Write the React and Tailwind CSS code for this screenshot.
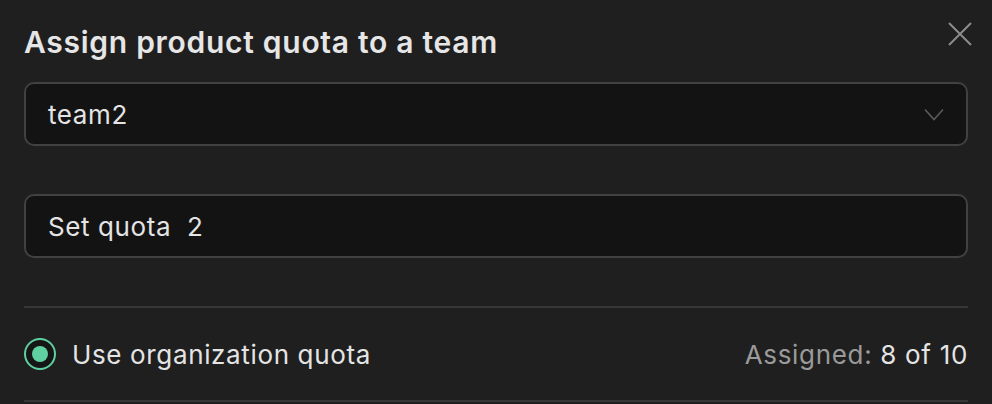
import React from 'react';

const App = () => {
  return (
    <div
      className="relative w-[992px] h-[404px] overflow-hidden bg-[#1f1f1f] text-[#e4e4e4]"
      style={{ fontFamily: 'Inter, "Noto Sans", sans-serif' }}
    >
      {/* Close button */}
      <button className="absolute top-[22px] right-[20px] w-6 h-6 text-[#8c8c8c]">
        <svg viewBox="0 0 24 24" width="24" height="24" fill="none" stroke="currentColor" strokeWidth="2">
          <path d="M1 1L23 23M23 1L1 23" />
        </svg>
      </button>

      <div className="px-6 pt-6">
        <h1 className="text-[30px] leading-[36px] font-semibold tracking-[0.72px] text-[#e6e6e6]">
          Assign product quota to a team
        </h1>

        {/* Team select */}
        <div className="mt-[22px] h-16 flex items-center justify-between rounded-[10px] border-2 border-[#414141] bg-[#131313] pl-[22px] pr-[22px]">
          <span className="text-[26px] tracking-[0.6px] text-[#e4e4e4]">team2</span>
          <svg width="20" height="13" viewBox="0 0 20 13" fill="none" stroke="#5a5a5a" strokeWidth="1.6">
            <path d="M1 1.5L10 11.5L19 1.5" />
          </svg>
        </div>

        {/* Quota input */}
        <div className="mt-12 h-16 flex items-center rounded-[10px] border-2 border-[#414141] bg-[#131313] pl-[22px]">
          <span className="text-[26px] tracking-[0.6px] text-[#e4e4e4] whitespace-pre">Set quota  2</span>
        </div>

        <div className="mt-12 border-t-2 border-[#363636]" />

        {/* Organization quota */}
        <div className="h-[94px] flex items-center justify-between border-b-2 border-[#363636]">
          <div className="flex items-center gap-4">
            <div className="w-8 h-8 rounded-full border-2 border-[#5fd0a0] flex items-center justify-center bg-[#161616]">
              <div className="w-4 h-4 rounded-full bg-[#5fd0a0]" />
            </div>
            <span className="text-[26px] tracking-[0.64px] text-[#e4e4e4]">Use organization quota</span>
          </div>
          <div className="text-[26px] tracking-[0.68px]">
            <span className="text-[#9a9a9a]">Assigned: </span>
            <span className="text-[#e4e4e4]">8 of 10</span>
          </div>
        </div>
      </div>
    </div>
  );
};

export default App;
